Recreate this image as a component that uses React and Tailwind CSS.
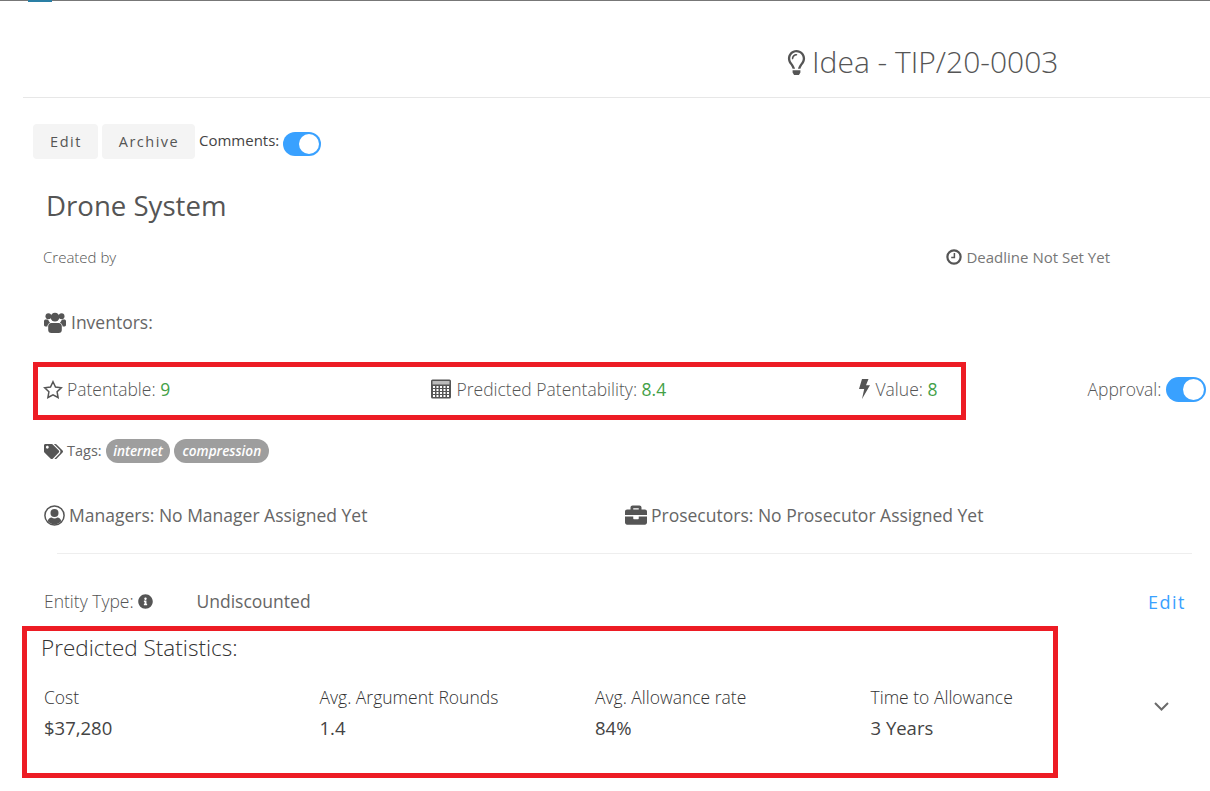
import React from "react";
import { FaRegLightbulb, FaTags, FaBriefcase, FaInfoCircle } from "react-icons/fa";

function Toggle({ big }) {
  return (
    <span className={big ? "flex h-[25px] w-10 items-center justify-end rounded-full bg-[#39a1ff] pr-[2px]" : "flex h-6 w-[38px] items-center justify-end rounded-full bg-[#39a1ff] pr-[2px]"}>
      <span className={big ? "h-[21px] w-[21px] rounded-full bg-white" : "h-5 w-5 rounded-full bg-white"} />
    </span>
  );
}

function Stat({ label, value, className }) {
  return (
    <div className={className}>
      <div className="text-[17.5px] font-light leading-[22px] text-[#333]">{label}</div>
      <div className="mt-[9px] text-[18.5px] leading-[22px] text-[#444]">{value}</div>
    </div>
  );
}

const ClockIcon = () => (
  <svg width="16" height="16" viewBox="0 0 16 16" fill="none" stroke="#555" className="shrink-0">
    <circle cx="8" cy="8" r="6.6" strokeWidth="2.2" />
    <path d="M8.4 4v4.6H5.2" strokeWidth="1.5" />
  </svg>
);

const UsersIcon = () => (
  <svg width="22" height="21" viewBox="0 0 22 21" fill="#555" className="shrink-0">
    <circle cx="4.4" cy="4.2" r="2.9" />
    <circle cx="17.6" cy="4.2" r="2.9" />
    <circle cx="11" cy="5.2" r="4.4" />
    <path d="M0 9.2c0-1 .8-1.6 1.8-1.6h2.5c.2 1.3.9 2.4 1.8 3.2-1.6.6-2.6 1.9-2.8 3.6H1.4C.6 14.400 0 13.800 0 13z" />
    <path d="M22 9.200c0-1-.8-1.600-1.800-1.600h-2.500c-.2 1.300-.9 2.400-1.800 3.200 1.600.6 2.600 1.900 2.800 3.600h1.900c.8 0 1.400-.6 1.400-1.400z" />
    <path d="M7.200 11h7.600c1.800 0 3 1.400 3 3.400v3.600c0 1.700-1.200 3-3 3H7.200c-1.800 0-3-1.300-3-3v-3.600c0-2 1.200-3.400 3-3.400z" />
  </svg>
);

const StarIcon = () => (
  <svg width="20" height="19" viewBox="0 0 20 19" fill="none" stroke="#555" strokeWidth="1.5" strokeLinejoin="miter" className="shrink-0">
    <path d="M10 1.700l2.500 5.300 5.800.8-4.200 4 1 5.700L10 14.800l-5.100 2.700 1-5.700-4.200-4 5.800-.8z" />
  </svg>
);

const CalcIcon = () => (
  <svg width="20" height="20" viewBox="0 0 20 20" className="shrink-0">
    <rect x="0" y="0.500" width="20" height="19" rx="1.500" fill="#555" />
    <rect x="1.500" y="2" width="17" height="3.500" fill="#bbb" />
    {[7, 10, 13, 16].map((y) =>
      [2, 5.500, 9, 12.500, 16].map((x) => (
        <rect key={x + "-" + y} x={x} y={y} width="2" height="2" fill="#fff" />
      ))
    )}
  </svg>
);

const BoltIcon = () => (
  <svg width="11" height="20" viewBox="0 0 11 20" fill="#555" className="shrink-0">
    <path d="M3 0h6.500L7 6.200h4L3 20l2.200-10H0z" />
  </svg>
);

const UserCircleIcon = () => (
  <svg width="21" height="21" viewBox="0 0 21 21" className="shrink-0">
    <circle cx="10.500" cy="10.500" r="9.600" fill="none" stroke="#555" strokeWidth="1.500" />
    <circle cx="10.500" cy="8" r="4" fill="#555" />
    <path d="M3.800 16.200c.4-2.500 2-3.700 3.800-3.700 1.700 1.200 4.100 1.200 5.800 0 1.800 0 3.400 1.200 3.800 3.700-1.700 2-4.200 3.200-6.700 3.200s-5-1.200-6.700-3.200z" fill="#555" />
  </svg>
);

const ChevronIcon = () => (
  <svg width="15" height="9" viewBox="0 0 15 9" fill="none" stroke="#6b6b6b" strokeWidth="2" className="mt-[16px] shrink-0">
    <path d="M1 1l6.500 6.500L14 1" />
  </svg>
);

export default function App() {
  return (
    <div className="relative h-[791px] w-[1210px] overflow-hidden bg-white font-['Open_Sans',sans-serif] text-[#555]">
      <div className="h-px bg-[#777]" />
      <div className="ml-[23px] flex h-[97px] items-start border-b border-[#e7e7e7] pl-[764px] pt-[39px]">
        <h1 className="flex items-center gap-[3px] text-[30px] font-light leading-[44px] text-[#555]">
          <FaRegLightbulb className="-ml-[3px] text-[25px] text-[#555]" />
          Idea - TIP/20-0003
        </h1>
      </div>

      <div className="mt-[26px] flex h-[35px] items-start pl-[33px]">
        <button className="h-[35px] w-[65px] rounded-[4px] bg-[#f4f4f4] pl-px text-[14.500px] tracking-[1.500px] text-[#555]">Edit</button>
        <button className="ml-1 h-[35px] w-[93px] rounded-[4px] bg-[#f4f4f4] pl-px text-[14.500px] tracking-[1.500px] text-[#555]">Archive</button>
        <span className="ml-1 text-[15px] leading-[32px] text-[#444]">Comments:</span>
        <span className="ml-[4px] mt-2"><Toggle /></span>
      </div>

      <h2 className="ml-[46px] mt-[26px] text-[27.600px] leading-[40px] text-[#555]">Drone System</h2>

      <div className="mt-[20px] flex h-[24px] items-center pl-[43px] pr-[100px]">
        <span className="text-[15px] font-light text-[#555]">Created by</span>
        <span className="ml-auto flex items-center gap-[4px] text-[15px] text-[#777]">
          <ClockIcon />
          Deadline Not Set Yet
        </span>
      </div>

      <div className="mt-[41px] flex h-[24px] items-center gap-[5px] pl-[44px] text-[17.500px] text-[#666]">
        <UsersIcon />
        Inventors:
      </div>

      <div className="mt-[42px] grid h-[24px] grid-cols-[387.500px_428px_229px_auto] items-center pl-[43px] text-[17.500px] font-light text-[#555]">
        <span className="flex items-center gap-[4px]">
          <StarIcon />
          <span>Patentable: <span className="font-normal text-[#43a047]">9</span></span>
        </span>
        <span className="flex items-center gap-[6px]">
          <CalcIcon />
          <span>Predicted Patentability: <span className="font-normal text-[#43a047]">8.4</span></span>
        </span>
        <span className="flex items-center gap-[6px]">
          <BoltIcon />
          <span>Value: <span className="font-normal text-[#43a047]">8</span></span>
        </span>
        <span className="flex items-center gap-[5px]">
          Approval:
          <Toggle big />
        </span>
      </div>

      <div className="mt-[39px] flex h-[24px] items-center pl-[44px] text-[14.500px] text-[#666]">
        <FaTags className="text-[19px] text-[#555]" />
        <span className="ml-[4px]">Tags:</span>
        <span className="ml-1 rounded-full bg-[#9e9e9e] px-[7.500px] text-[13.600px] font-semibold italic leading-[24px] text-white">internet</span>
        <span className="ml-1 rounded-full bg-[#9e9e9e] px-[8px] text-[13.600px] font-semibold italic leading-[24px] text-white">compression</span>
      </div>

      <div className="mt-[39px] grid h-[24px] grid-cols-[581px_auto] items-center pl-[44px] text-[17.500px] text-[#666]">
        <span className="flex items-center gap-[4px]">
          <UserCircleIcon />
          Managers: No Manager Assigned Yet
        </span>
        <span className="flex items-center gap-[4px]">
          <FaBriefcase className="text-[22px] text-[#555]" />
          Prosecutors: No Prosecutor Assigned Yet
        </span>
      </div>

      <div className="ml-[57px] mt-[27px] w-[1135px] border-t border-[#eee]" />

      <div className="mt-[35px] flex h-[24px] items-center pl-[44px] pr-[24px] text-[17.500px]">
        <span className="flex w-[152.500px] items-center gap-[4px] font-light text-[#555]">
          Entity Type:
          <FaInfoCircle className="text-[15px]" />
        </span>
        <span className="text-[#666]">Undiscounted</span>
        <span className="ml-auto mt-[2px] text-[18px] tracking-[1.500px] text-[#39a1ff]">Edit</span>
      </div>

      <div className="ml-[41px] mt-[20px] text-[22.500px] font-light leading-[30px] text-[#333]">Predicted Statistics:</div>

      <div className="mt-[23px] grid grid-cols-[275.500px_275.500px_275.500px_auto] pl-[44px]">
        <Stat label="Cost" value="$37,280" />
        <Stat label="Avg. Argument Rounds" value="1.4" />
        <Stat label="Avg. Allowance rate" value="84%" />
        <div className="flex">
          <Stat label="Time to Allowance" value="3 Years" className="w-[283px]" />
          <ChevronIcon />
        </div>
      </div>

      {/* Red annotation boxes drawn over the page */}
      <div className="absolute left-[33px] top-[362px] h-[58px] w-[933px] border-[5px] border-[#ed1c24]" />
      <div className="absolute left-[22px] top-[626px] h-[152px] w-[1036px] border-[5px] border-[#ed1c24]" />
      <div className="absolute left-[28px] top-0 h-[2px] w-[24px] bg-[#2a7fa5]" />
    </div>
  );
}
